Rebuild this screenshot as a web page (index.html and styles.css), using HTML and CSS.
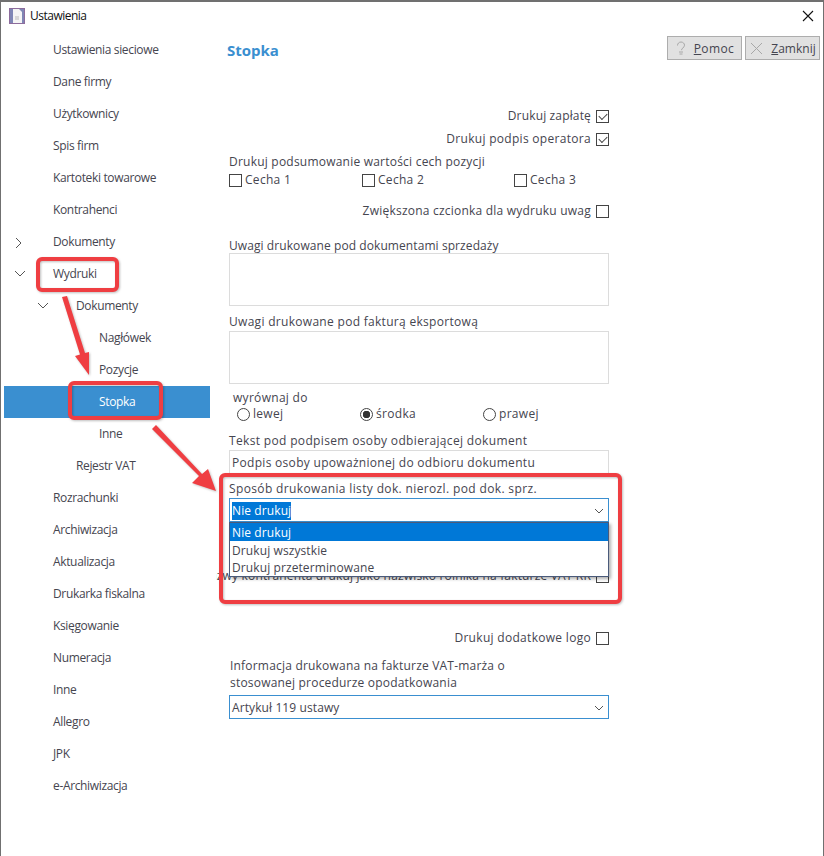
FILE: index.html
```html
<!DOCTYPE html>
<html lang="pl">
  <head>
    <meta charset="UTF-8" />
    <title>Ustawienia</title>
    <link rel="stylesheet" href="styles.css">
  </head>
  <body>
    <div class="window">
      <div class="titlebar">
        <svg class="app-icon" width="16" height="16" viewBox="0 0 16 16">
          <rect width="16" height="16" fill="#8d6c9c"/>
          <rect x="1" y="1" width="14" height="14" fill="#7f86b5"/>
          <path d="M4 1h6l3 3v11H4z" fill="#f4f4f4"/>
          <path d="M6 9h4M6 11h4" stroke="#b9b9b9"/>
        </svg>
        <span class="title">Ustawienia</span>
        <svg class="close" width="12" height="12" viewBox="0 0 12 12">
          <path d="M1 1l10 10M11 1L1 11" stroke="#111" stroke-width="1.1" fill="none"/>
        </svg>
      </div>
      <div class="main">
        <ul class="tree">
          <li>Ustawienia sieciowe</li>
          <li>Dane firmy</li>
          <li>Użytkownicy</li>
          <li>Spis firm</li>
          <li>Kartoteki towarowe</li>
          <li>Kontrahenci</li>
          <li>
            <svg class="toggle" width="10" height="12" viewBox="0 0 10 12"><path d="M2 1l5 5-5 5" /></svg>
            Dokumenty
          </li>
          <li>
            <svg class="toggle" width="12" height="10" viewBox="0 0 12 10"><path d="M1 2l5 5 5-5" /></svg>
            Wydruki
          </li>
          <li class="level-1">
            <svg class="toggle" width="12" height="10" viewBox="0 0 12 10"><path d="M1 2l5 5 5-5" /></svg>
            Dokumenty
          </li>
          <li class="level-2">Nagłówek</li>
          <li class="level-2">Pozycje</li>
          <li class="level-2 selected">Stopka</li>
          <li class="level-2">Inne</li>
          <li class="level-1">Rejestr VAT</li>
          <li>Rozrachunki</li>
          <li>Archiwizacja</li>
          <li>Aktualizacja</li>
          <li>Drukarka fiskalna</li>
          <li>Księgowanie</li>
          <li>Numeracja</li>
          <li>Inne</li>
          <li>Allegro</li>
          <li>JPK</li>
          <li>e-Archiwizacja</li>
        </ul>

        <div class="content">
          <h2>Stopka</h2>
          <div class="form">
            <div class="row-check r-zaplata">Drukuj zapłatę <span class="check checked"></span></div>
            <div class="row-check r-podpis">Drukuj podpis operatora <span class="check checked"></span></div>
            <div class="label r-cechy">Drukuj podsumowanie wartości cech pozycji</div>
            <div class="cechy">
              <div class="cecha c1"><span class="check"></span>Cecha 1</div>
              <div class="cecha c2"><span class="check"></span>Cecha 2</div>
              <div class="cecha"><span class="check"></span>Cecha 3</div>
            </div>
            <div class="row-check r-czcionka">Zwiększona czcionka dla wydruku uwag <span class="check"></span></div>
            <div class="label r-uwagi1">Uwagi drukowane pod dokumentami sprzedaży</div>
            <div class="memo"></div>
            <div class="label r-uwagi2">Uwagi drukowane pod fakturą eksportową</div>
            <div class="memo"></div>
            <div class="label r-wyrownaj">wyrównaj do</div>
            <div class="radios">
              <div class="radio-item c1"><span class="radio"></span>lewej</div>
              <div class="radio-item c1"><span class="radio on"></span>środka</div>
              <div class="radio-item"><span class="radio"></span>prawej</div>
            </div>
            <div class="label r-tekst">Tekst pod podpisem osoby odbierającej dokument</div>
            <div class="input">Podpis osoby upoważnionej do odbioru dokumentu</div>
            <div class="label r-sposob">Sposób drukowania listy dok. nierozl. pod dok. sprz.</div>
            <div class="select r-select">
              <span class="sel-text">Nie drukuj</span>
              <svg class="chevron" width="10" height="6" viewBox="0 0 10 6"><path d="M1 1l4 4 4-4" /></svg>
              <ul class="dropdown">
                <li class="active">Nie drukuj</li>
                <li>Drukuj wszystkie</li>
                <li>Drukuj przeterminowane</li>
              </ul>
            </div>
            <div class="row-check r-nazwy">Nazwy kontrahenta drukuj jako nazwisko rolnika na fakturze VAT RR <span class="check"></span></div>
            <div class="row-check r-logo">Drukuj dodatkowe logo <span class="check"></span></div>
            <div class="label r-info">Informacja drukowana na fakturze VAT-marża o<br>stosowanej procedurze opodatkowania</div>
            <div class="select r-artykul">
              <span>Artykuł 119 ustawy</span>
              <svg class="chevron" width="10" height="6" viewBox="0 0 10 6"><path d="M1 1l4 4 4-4" /></svg>
            </div>
          </div>
        </div>

        <div class="buttons">
          <button type="button">
            <svg width="10" height="14" viewBox="0 0 10 14"><path d="M1.500 4.500C1.500 2.500 3 1 5 1s3.500 1.500 3.500 3.200c0 2.800-3 2.500-3 5M3 11h4M3.500 13h3" fill="none" stroke="#a8a8a8"/></svg>
            <span class="btn-help"><u>P</u>omoc</span>
          </button>
          <button type="button">
            <svg width="13" height="13" viewBox="0 0 13 13"><path d="M1 1l11 11M12 1L1 12" fill="none" stroke="#a8a8a8"/></svg>
            <span><u>Z</u>amknij</span>
          </button>
        </div>
      </div>
    </div>

    <svg class="marks" width="824" height="856" viewBox="0 0 824 856">
      <g fill="none" stroke="#ef3e42" stroke-width="4">
        <rect x="38" y="259" width="79" height="31" rx="4"/>
        <rect x="70" y="383" width="91" height="35" rx="4"/>
        <rect x="221" y="475" width="399" height="127" rx="4"/>
      </g>
      <g fill="#ef3e42">
        <path d="M62 297L67 296L85 353L89 352L89 375L75 356L80 354.500Z"/>
        <path d="M156 425L152 429L199 476L192 483L216 491L208 469L202 474Z"/>
      </g>
    </svg>
  </body>
</html>
```

FILE: styles.css
```css
* {
  box-sizing: border-box;
}

html, body {
  margin: 0;
  padding: 0;
}

body {
  font-family: "Open Sans", "Noto Sans", sans-serif;
  font-size: 12px;
  color: #45454f;
  background: #fff;
  width: 824px;
  height: 856px;
  position: relative;
  overflow: hidden;
}

.window {
  width: 824px;
  height: 856px;
  border: 1px solid #707070;
  border-top-width: 2px;
  border-bottom: none;
  display: flex;
  flex-direction: column;
}

.titlebar {
  height: 27px;
  display: flex;
  align-items: center;
  padding: 0 8px;
  flex: none;
}

.title {
  margin-left: 5px;
  color: #111;
  letter-spacing: -0.5px;
}

.close {
  margin-left: auto;
  margin-right: 1px;
}

.main {
  flex: 1;
  display: flex;
  position: relative;
}

/* tree on the left */
.tree {
  list-style: none;
  margin: 5px 0 0 3px;
  padding: 0;
  width: 206px;
  flex: none;
  letter-spacing: -0.35px;
}

.tree li {
  height: 32px;
  line-height: 32px;
  padding-left: 49px;
  position: relative;
}

.tree li.level-1 {
  padding-left: 72px;
}

.tree li.level-2 {
  padding-left: 95px;
}

.tree li.selected {
  background: #3a8fd0;
  color: #fff;
}

.toggle {
  position: absolute;
  left: 10px;
  top: 11px;
}

.level-1 .toggle {
  left: 33px;
}

.toggle path, .chevron path {
  fill: none;
  stroke: #555;
  stroke-width: 1;
}

.content {
  width: 380px;
  margin-left: 19px;
  flex: none;
}

.content h2 {
  margin: 11px 0 0 -2px;
  font-size: 15px;
  line-height: 20px;
  font-weight: 700;
  color: #3a8fd0;
}

.form {
  display: flex;
  flex-direction: column;
  margin-top: 48px;
  letter-spacing: 0.3px;
}

.label {
  line-height: 18px;
  height: 16px;
}

.row-check {
  line-height: 16px;
  height: 16px;
  display: flex;
  justify-content: flex-end;
  align-items: center;
  gap: 5px;
  white-space: nowrap;
}

.check {
  width: 13px;
  height: 13px;
  border: 1px solid #444;
  background: #fff;
  flex: none;
  display: inline-block;
  position: relative;
}

.check.checked::after {
  content: "";
  position: absolute;
  left: 2px;
  top: 0px;
  width: 7px;
  height: 4px;
  border-left: 1px solid #444;
  border-bottom: 1px solid #444;
  transform: translateY(2px) rotate(-45deg);
}

.r-zaplata { letter-spacing: 0.15px; }
.r-podpis { margin-top: 7px; }
.r-cechy { margin-top: 7px; line-height: 16px; letter-spacing: 0.22px; }

.cechy, .radios {
  display: flex;
  height: 16px;
  line-height: 16px;
  margin-top: 2px;
}

.cecha {
  display: flex;
  align-items: center;
  gap: 3px;
}

.cecha.c1 { width: 133px; }
.cecha.c2 { width: 152px; }

.r-czcionka { margin-top: 15px; letter-spacing: 0.22px; }
.r-uwagi1 { margin-top: 18px; letter-spacing: 0.08px; }
.r-uwagi2 { margin-top: 7px; }

.memo {
  height: 53px;
  border: 1px solid #dcdcdc;
  margin-top: 0;
}

.r-uwagi2 + .memo {
  margin-top: 2px;
}

.r-wyrownaj {
  margin: 5px 0 0 4px;
}

.radios {
  margin: 1px 0 0 8px;
}

.radio-item {
  display: flex;
  align-items: center;
  gap: 3px;
}

.radio-item.c1 { width: 123px; }

.radio {
  width: 13px;
  height: 13px;
  border: 1px solid #444;
  border-radius: 50%;
  background: #fff;
  flex: none;
}

.radio.on {
  background: radial-gradient(circle, #333 0 3.500px, #fff 4px);
}

.r-tekst { margin-top: 10px; letter-spacing: 0.34px; }

.input {
  height: 25px;
  line-height: 23px;
  margin-top: 2px;
  padding-left: 2px;
  border: 1px solid #dcdcdc;
}

.r-sposob { margin-top: 5px; letter-spacing: 0.36px; }

.select {
  height: 24px;
  border: 1px solid #3a8fd0;
  display: flex;
  align-items: center;
  padding-left: 2px;
  position: relative;
  margin-top: 2px;
  letter-spacing: 0.1px;
}

.r-select {
  padding-top: 2px;
}

.sel-text {
  background: #0078d7;
  color: #fff;
  line-height: 18px;
}

.chevron {
  position: absolute;
  right: 4px;
  top: 9px;
}

.dropdown {
  position: absolute;
  left: -1px;
  right: -1px;
  top: 23px;
  height: 55px;
  margin: 0;
  padding: 0;
  list-style: none;
  background: #fff;
  border: 1px solid #4a5a7a;
  box-shadow: 2px 2px 3px rgba(0, 0, 0, 0.3);
  z-index: 2;
}

.dropdown li {
  height: 17px;
  line-height: 19px;
  padding-left: 2px;
}

.dropdown li.active {
  height: 18px;
  line-height: 20px;
  background: #0078d7;
  color: #fff;
}

/* left end is cut off by the edge of the panel in the original */
.r-nazwy {
  margin: 46px 0 0 -13px;
  overflow: hidden;
  letter-spacing: 0.17px;
}

.r-logo { margin-top: 46px; }
.r-info {
  margin-top: 10px;
  height: 34px;
  line-height: 17px;
  padding: 1px 0 0 1px;
  letter-spacing: 0.2px;
}

.r-artykul { margin-top: 5px; }

.buttons {
  display: flex;
  gap: 3px;
  position: absolute;
  top: 7px;
  right: 3px;
}

.buttons button {
  width: 75px;
  height: 24px;
  padding: 0 0 0 1px;
  display: flex;
  align-items: center;
  justify-content: center;
  gap: 8px;
  background: #e1e1e1;
  border: 1px solid #adadad;
  color: #45454f;
  font: inherit;
}

.btn-help {
  letter-spacing: 0.4px;
}

.marks {
  position: absolute;
  left: 0;
  top: 0;
  pointer-events: none;
  filter: drop-shadow(1px 1px 1px rgba(0, 0, 0, 0.25));
}
```
